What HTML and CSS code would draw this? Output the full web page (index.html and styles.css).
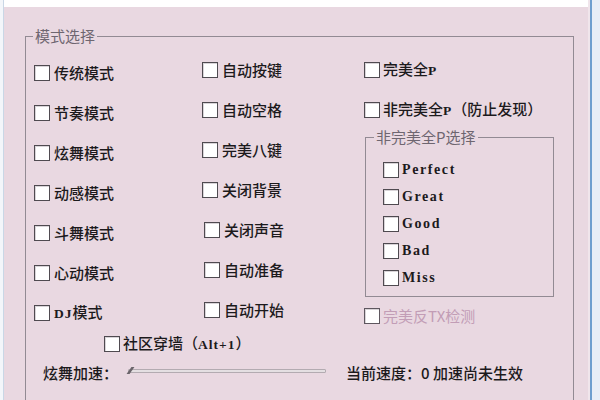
FILE: index.html
```html
<!DOCTYPE html>
<html lang="zh-CN">
<head>
<meta charset="utf-8">
<title>模式选择</title>
<link rel="stylesheet" href="styles.css">
</head>
<body>
<div class="frame">
  <div class="edge-left"></div>
  <div class="client">
    <div class="titlestrip"></div>
    <fieldset class="group main">
      <legend class="legend main-legend">模式选择</legend>
      <div class="cols">
        <div class="col col1">
          <label class="item row40"><span class="cb"></span><span class="txt">传统模式</span></label>
          <label class="item row40"><span class="cb"></span><span class="txt">节奏模式</span></label>
          <label class="item row40"><span class="cb"></span><span class="txt">炫舞模式</span></label>
          <label class="item row40"><span class="cb"></span><span class="txt">动感模式</span></label>
          <label class="item row40"><span class="cb"></span><span class="txt">斗舞模式</span></label>
          <label class="item row40"><span class="cb"></span><span class="txt">心动模式</span></label>
          <label class="item row40"><span class="cb"></span><span class="txt"><span class="lat">DJ</span>模式</span></label>
        </div>
        <div class="col col2">
          <label class="item row40"><span class="cb"></span><span class="txt">自动按键</span></label>
          <label class="item row40"><span class="cb"></span><span class="txt">自动空格</span></label>
          <label class="item row40"><span class="cb"></span><span class="txt">完美八键</span></label>
          <label class="item row40"><span class="cb"></span><span class="txt">关闭背景</span></label>
          <label class="item row40 shift"><span class="cb"></span><span class="txt">关闭声音</span></label>
          <label class="item row40 shift"><span class="cb"></span><span class="txt">自动准备</span></label>
          <label class="item row40 shift"><span class="cb"></span><span class="txt">自动开始</span></label>
        </div>
        <div class="col col3">
          <label class="item row40 tight"><span class="cb"></span><span class="txt">完美全<span class="lat">P</span></span></label>
          <label class="item row40 tight"><span class="cb"></span><span class="txt">非完美全<span class="lat">P</span>（防止发现）</span></label>
          <fieldset class="group sub">
            <legend class="legend sub-legend">非完美全P选择</legend>
            <div class="sublist">
              <label class="item row27 tight"><span class="cb"></span><span class="lat big">Perfect</span></label>
              <label class="item row27 tight"><span class="cb"></span><span class="lat big">Great</span></label>
              <label class="item row27 tight"><span class="cb"></span><span class="lat big">Good</span></label>
              <label class="item row27 tight"><span class="cb"></span><span class="lat big">Bad</span></label>
              <label class="item row27 tight"><span class="cb"></span><span class="lat big">Miss</span></label>
            </div>
          </fieldset>
          <label class="item row38 tight disabled"><span class="cb"></span><span class="txt">完美反TX检测</span></label>
        </div>
      </div>
      <label class="item wall tight"><span class="cb"></span><span class="txt">社区穿墙（<span class="lat">Alt+1</span>）</span></label>
      <div class="speed">
        <span class="txt">炫舞加速：</span>
        <div class="slider"><span class="thumb"></span></div>
        <span class="txt status">当前速度：0 加速尚未生效</span>
      </div>
    </fieldset>
  </div>
  <div class="edge-right"></div>
</div>
</body>
</html>
```
FILE: styles.css
```css
html, body {
  margin: 0;
  padding: 0;
}
body {
  width: 600px;
  height: 400px;
  overflow: hidden;
  font-family: "Noto Sans CJK SC", "Noto Sans", sans-serif;
  font-size: 15px;
  font-weight: 500;
  color: #1c1a1c;
}
.frame {
  display: flex;
  height: 400px;
}
.edge-left {
  width: 3px;
  background: #f3f6fa;
  border-right: 1px solid #c9d7e6;
}
.edge-right {
  width: 12px;
  background: linear-gradient(to right, #f0e5eb 0, #f0e5eb 2px, #6e9fcf 2px, #6e9fcf 4px, #e7eef7 4px);
}
.client {
  flex: 1;
  background: #e9d8e1;
  display: flex;
  flex-direction: column;
  overflow: hidden;
}
.titlestrip {
  height: 7px;
  background: #ffffff;
  flex: none;
}
.group {
  margin: 0;
  padding: 0;
  border: 1px solid #928a93;
  box-sizing: border-box;
  min-width: 0;
}
.main {
  margin: 19px 0 0 21px;
  width: 549px;
  padding-bottom: 40px;
  flex: none;
}
.legend {
  padding: 0 2px;
  color: #6e6670;
  line-height: 20px;
  font-size: 15px;
  font-weight: normal;
}
.main-legend {
  margin-left: 7px;
}
.cols {
  display: flex;
  align-items: flex-start;
  padding-left: 8px;
}
.col {
  display: flex;
  flex-direction: column;
}
.col1 {
  width: 168px;
  margin-top: 7px;
}
.col2 {
  width: 162px;
  margin-top: 4px;
}
.col3 {
  margin-top: 4px;
}
.item {
  display: flex;
  align-items: center;
  gap: 4px;
  white-space: nowrap;
}
.item.tight {
  gap: 3px;
}
.row40 { height: 40px; }
.row38 { height: 38px; }
.row27 { height: 27px; }
.shift { margin-left: 2px; }
.cb {
  width: 16px;
  height: 16px;
  box-sizing: border-box;
  border: 1px solid #4f4a50;
  background: #ffffff;
  box-shadow: inset 1px 1px 0 #d9d4d8;
  flex: none;
}
.txt {
  line-height: 20px;
}
.lat {
  font-family: "Liberation Serif", serif;
  font-weight: bold;
  font-size: 13.5px;
  letter-spacing: 1px;
}
.lat.big {
  font-size: 14px;
  letter-spacing: 1.6px;
  line-height: 20px;
  color: #1c1a1c;
}
.sub {
  margin: -1px 0 0 1px;
  width: 189px;
  padding: 0 0 5px 17px;
}
.sub-legend {
  margin-left: -9px;
  line-height: 16px;
}
.sublist {
  padding-top: 11px;
  display: flex;
  flex-direction: column;
}
.disabled .txt {
  color: #c29db6;
  font-weight: normal;
}
.disabled .cb {
  border-color: #5e575f;
}
.wall {
  height: 18px;
  margin-left: 78px;
}
.speed {
  display: flex;
  align-items: center;
  height: 40px;
  padding-left: 17px;
}
.slider {
  position: relative;
  width: 198px;
  height: 4px;
  margin: 0 20px 0 10px;
  background: #e4dfe2;
  border: 1px solid #b3abb1;
  border-radius: 1px;
  box-sizing: border-box;
  align-self: center;
  transform: translateY(-2px);
}
.thumb {
  position: absolute;
  left: 0;
  top: -3px;
  width: 3px;
  height: 7px;
  background: #6a646a;
  transform: skewX(-35deg);
}
```
